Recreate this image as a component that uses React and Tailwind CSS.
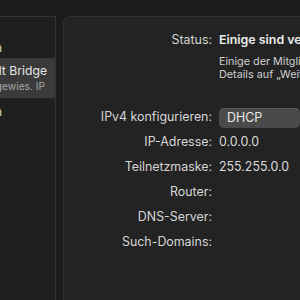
const font = { fontFamily: "Inter, 'Noto Sans', sans-serif" };

const rows = [
  ["IP-Adresse:", "0.0.0.0"],
  ["Teilnetzmaske:", "255.255.0.0"],
  ["Router:", ""],
  ["DNS-Server:", ""],
  ["Such-Domains:", ""],
];

export default function App() {
  return (
    <div
      className="w-[300px] h-[300px] overflow-hidden bg-[#1b1b1b] pt-[16px] flex text-[12.4px] text-[#d6d6d6]"
      style={font}
    >
      {/* Sidebar */}
      <div className="w-[56px] shrink-0 border-t border-r border-[#343434] bg-[#1f1f1f] overflow-hidden pt-[21px]">
        <div className="h-[20px] flex justify-end items-center pr-[53px] whitespace-nowrap">
          Verbunden
        </div>
        <div className="h-[40px] bg-[#3a3a3a] flex flex-col justify-center items-end pr-[8px] whitespace-nowrap">
          <span className="text-[#e8e8e8] text-[12.2px] leading-[16px]">Thunderbolt Bridge</span>
          <span className="text-[#a8a8a8] text-[10.2px] leading-[14px] pr-[2px]">Selbstzugewies. IP</span>
        </div>
        <div className="h-[28px] flex justify-end items-center pr-[53px] whitespace-nowrap">
          Verbunden
        </div>
      </div>

      {/* Main panel */}
      <div className="ml-[7px] flex-1 min-w-0 border-t border-l border-[#333333] rounded-tl-[8px] bg-[#232323] pt-[14px] whitespace-nowrap">
        <div className="flex h-[18px] items-center">
          <div className="w-[148px] shrink-0 text-right">Status:</div>
          <div className="ml-[7px] font-semibold text-[#ececec]">Einige sind verbunden</div>
        </div>
        <div className="ml-[155px] mt-[6px] text-[10.8px] leading-[13px] text-[#cfcfcf]">
          <div>Einige der Mitglieder sind nicht verbunden.</div>
          <div>Details auf „Weitere Optionen“.</div>
        </div>

        <div className="flex h-[25px] items-center mt-[24px]">
          <div className="w-[148px] shrink-0 text-right">IPv4 konfigurieren:</div>
          <div className="ml-[7px] h-[20px] w-[200px] rounded-[5px] bg-[#4a4a4a] border-t border-[#5a5a5a] flex items-center pl-[8px] text-[#e8e8e8]">
            DHCP
          </div>
        </div>

        {rows.map(([label, value]) => (
          <div key={label} className="flex h-[25px] items-center">
            <div className="w-[148px] shrink-0 text-right">{label}</div>
            <div className="ml-[7px] text-[#dcdcdc]">{value}</div>
          </div>
        ))}
      </div>
    </div>
  );
}
